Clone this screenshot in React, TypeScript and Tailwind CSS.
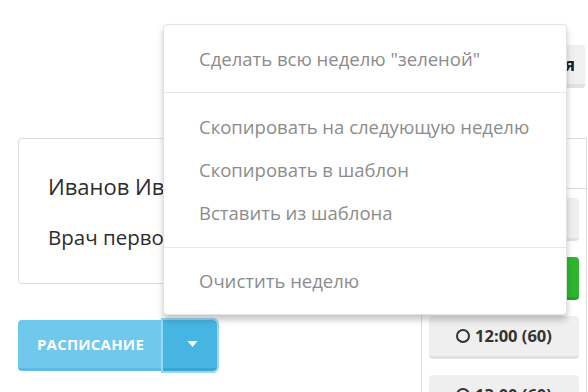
import React from "react";

const menuFont = { fontFamily: '"Open Sans", "Noto Sans", sans-serif' };

function MenuItem({ label }: { label: string }) {
  return (
    <div className="flex h-[43px] items-center pl-[35px] text-[18.5px] text-[#8c8c8c]">
      {label}
    </div>
  );
}

function TimeSlot({ time, variant = "gray" }: { time: string; variant?: "gray" | "green" }) {
  const cls =
    variant === "green"
      ? "bg-[#2db52f] border-b-[3px] border-[#23a026]"
      : "bg-[#efefef] border-b-[3px] border-[#e0e0e0]";
  return (
    <div
      className={`mb-[16px] flex h-[43px] items-center justify-center rounded-[4px] text-[16.5px] font-bold text-[#333] ${cls}`}
    >
      {time && (
        <>
          <span className="mr-[5px] inline-block h-[14px] w-[14px] rounded-full border-[2px] border-[#333]" />
          {time}
        </>
      )}
    </div>
  );
}

export default function App() {
  return (
    <div className="relative h-[392px] w-[588px] overflow-hidden bg-white" style={menuFont}>
      <div className="flex">
        {/* left side: doctor card + schedule button */}
        <div className="w-[421px] shrink-0 pl-[18px] pt-[138px]">
          <div className="h-[146px] w-[382px] rounded-[4px] border border-[#dcdcdc] pl-[29px] pt-[31px] text-[#2d2d2d]">
            <div className="whitespace-nowrap text-[22px] leading-[32px]">Иванов Иван Иванович</div>
            <div className="mt-[20px] whitespace-nowrap text-[20.5px] leading-[30px]">Врач первой категории</div>
          </div>

          <div className="mt-[36px] flex h-[51px]">
            <div className="flex w-[145px] items-center justify-center rounded-l-[4px] border-b-[3px] border-[#5dbbe3] bg-[#70c8ec] text-[15px] font-bold tracking-[0.2px] text-white">
              РАСПИСАНИЕ
            </div>
            <div className="flex w-[54px] items-center justify-center rounded-r-[4px] border-b-[3px] border-[#3aa6d3] bg-[#47b5e2] outline outline-[2px] outline-[#9ad8f1]">
              <svg width="11" height="6" viewBox="0 0 11 6" className="ml-[4px]">
                <path d="M0.5 0 H10.5 L5.5 6 Z" fill="#fff" />
              </svg>
            </div>
          </div>
        </div>

        {/* right side: day column */}
        <div className="w-[166px] shrink-0">
          <div className="ml-[8px] mr-[2px] mt-[45px] flex h-[43px] items-center justify-end overflow-hidden rounded-[3px] border-b-[4px] border-[#e2e2e2] bg-[#f0f0f0] pr-[10px] text-[17px] font-bold text-[#222]">
            <span className="whitespace-nowrap">Пятница, 12 января</span>
          </div>
          <div className="mt-[50px] border-l border-r border-t border-[#dcdcdc] px-[7px]">
            <div className="-mx-[7px] mb-[9px] h-[50px] border-b border-[#dcdcdc]" />
            <TimeSlot time="11:00 (60)" />
            <TimeSlot time="" variant="green" />
            <TimeSlot time="12:00 (60)" />
            <TimeSlot time="13:00 (60)" />
          </div>
        </div>
      </div>

      {/* open dropdown menu */}
      <div className="absolute left-[163px] top-[24px] w-[404px] rounded-[4px] border border-[#e2e2e2] bg-white pb-[12px] pt-[12px] shadow-[0_5px_6px_rgba(0,0,0,0.22)]">
        <MenuItem label={'Сделать всю неделю "зеленой"'} />
        <div className="mb-[12px] mt-[12px] h-px bg-[#e8e8e8]" />
        <MenuItem label="Скопировать на следующую неделю" />
        <MenuItem label="Скопировать в шаблон" />
        <MenuItem label="Вставить из шаблона" />
        <div className="mb-[11px] mt-[13px] h-px bg-[#e8e8e8]" />
        <MenuItem label="Очистить неделю" />
      </div>
    </div>
  );
}
